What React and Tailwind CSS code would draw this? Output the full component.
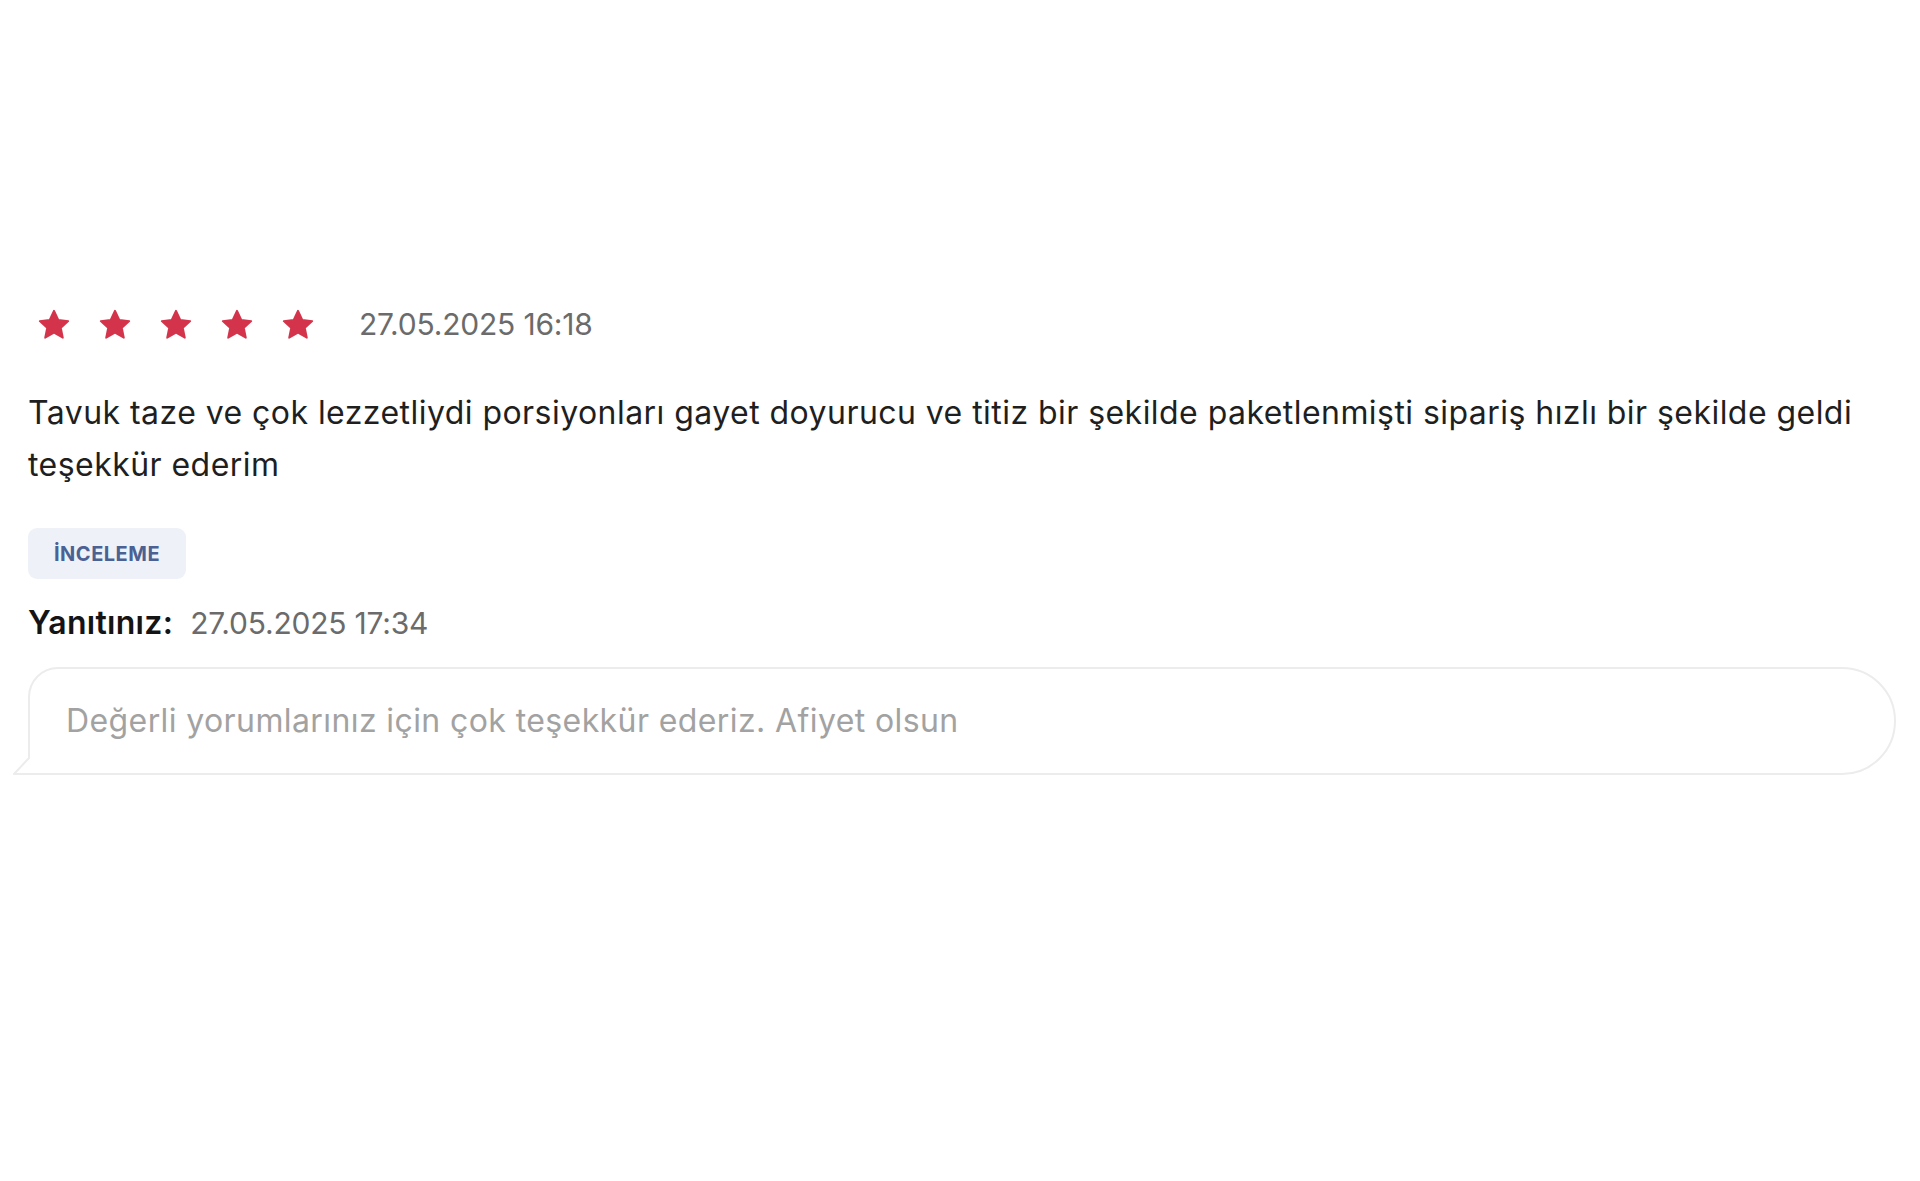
function Star() {
  return (
    <svg viewBox="0 0 24 24" className="h-[36px] w-[36px]" fill="#d4344b" stroke="#d4344b" strokeWidth="1.2" strokeLinejoin="round">
      <polygon points="12,2.5 14.9,8.6 21.5,9.4 16.6,13.9 17.9,20.5 12,17.2 6.1,20.5 7.4,13.9 2.5,9.4 9.1,8.6" />
    </svg>
  );
}

export default function App() {
  const font = { fontFamily: "Inter, 'Noto Sans', sans-serif" };

  return (
    <div className="min-h-[1181px] bg-white" style={font}>
      <div className="pl-[28px] pr-[24px] pt-[302px]">
        <div className="flex items-center">
          <div className="flex items-center gap-[25px] pl-[8px]">
            <Star />
            <Star />
            <Star />
            <Star />
            <Star />
          </div>
          <span className="ml-[43px] text-[30px] tracking-[-0.2px] text-[#6b6b6b]">27.05.2025 16:18</span>
        </div>

        <p className="mt-[40px] text-[32px] leading-[52px] tracking-[0.45px] text-[#1f1f1f]">
          Tavuk taze ve çok lezzetliydi porsiyonları gayet doyurucu ve titiz bir şekilde paketlenmişti sipariş hızlı bir şekilde geldi teşekkür ederim
        </p>

        <div className="mt-[37px] inline-flex h-[51px] items-center rounded-[9px] bg-[#eef2f8] px-[26px] text-[20px] font-bold tracking-[0.5px] text-[#4b6194]">
          İNCELEME
        </div>

        <div className="mt-[20px] flex items-baseline gap-[17px]">
          <span className="text-[32px] font-semibold tracking-[0.3px] text-[#141414]">Yanıtınız:</span>
          <span className="text-[30px] tracking-[-0.2px] text-[#6b6b6b]">27.05.2025 17:34</span>
        </div>

        <div className="relative mt-[20px] flex h-[108px] items-center rounded-tl-[30px] rounded-r-[54px] border-2 border-[#ececec] pl-[36px]">
          <span className="text-[32px] tracking-[0.4px] text-[#a2a2a2]">Değerli yorumlarınız için çok teşekkür ederiz. Afiyet olsun</span>
          <svg className="absolute bottom-[-2px] left-[-18px] h-[20px] w-[20px]" viewBox="0 0 20 20">
            <polygon points="16,0 20,0 20,20 2,20" fill="#ffffff" />
            <polyline points="17,0 17,3 2,19 20,19" fill="none" stroke="#ececec" strokeWidth="2" strokeLinejoin="round" />
          </svg>
        </div>
      </div>
    </div>
  );
}
